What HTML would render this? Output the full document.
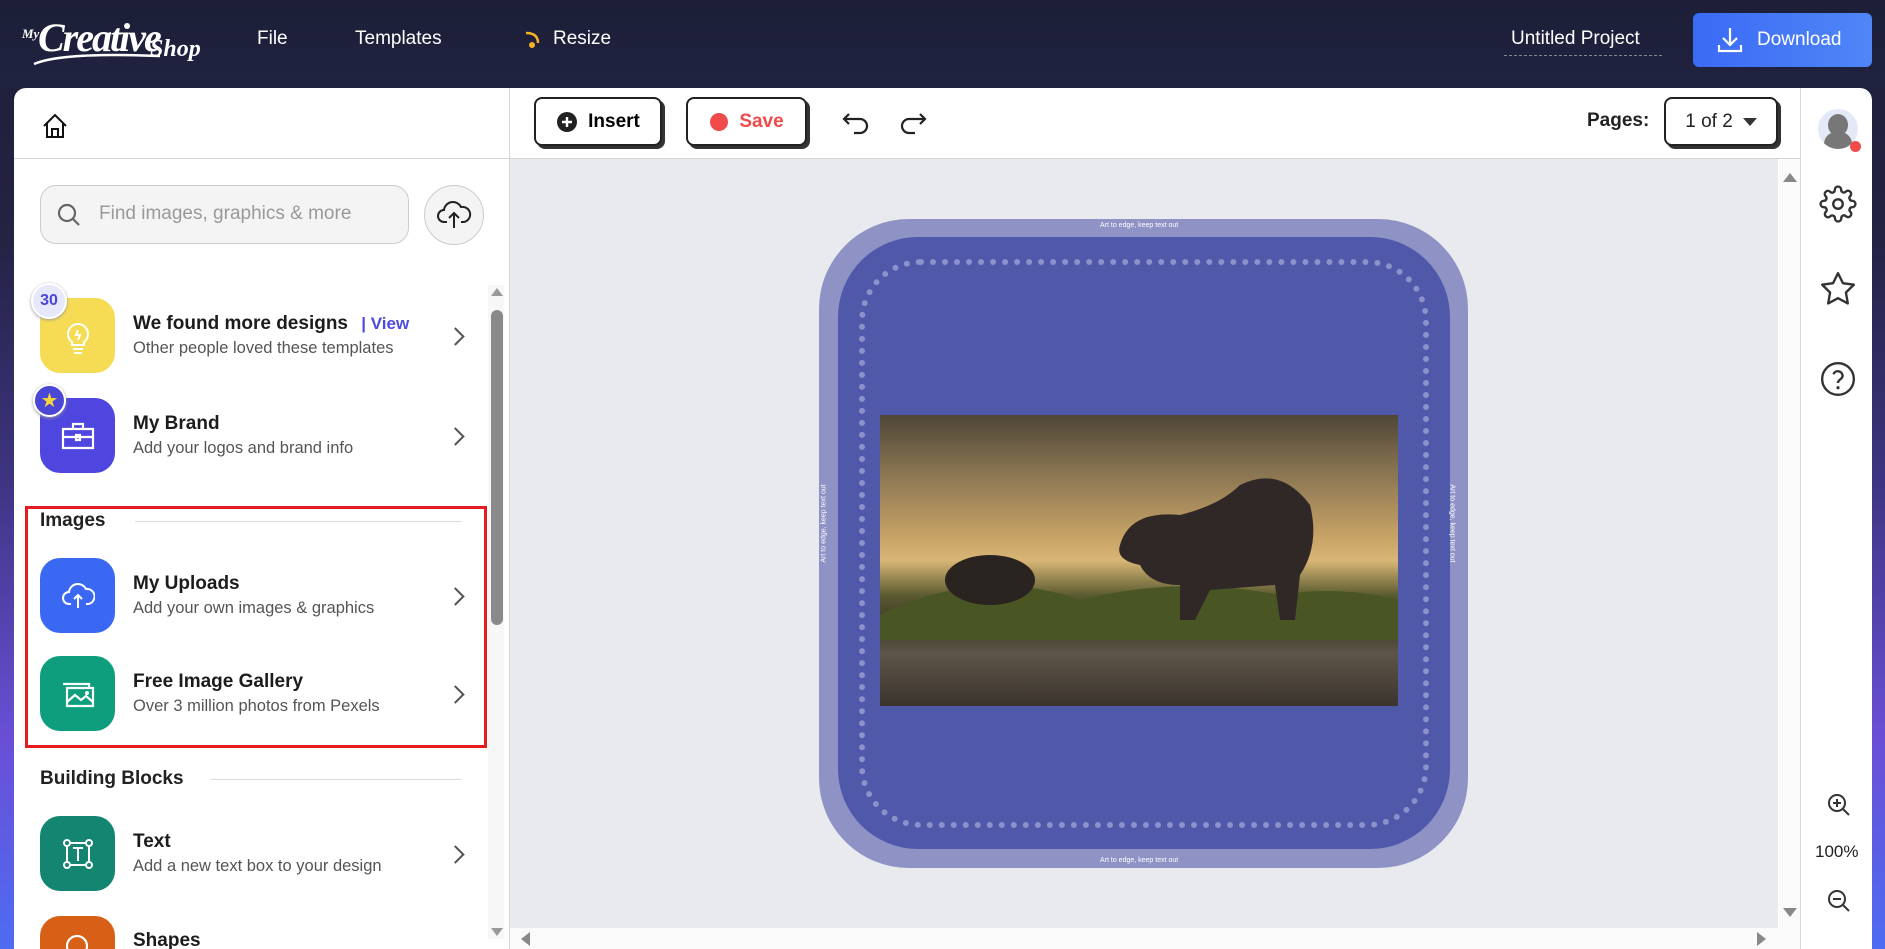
<!DOCTYPE html>
<html><head><meta charset="utf-8"><style>
*{box-sizing:border-box;margin:0;padding:0}
html,body{width:1885px;height:949px;overflow:hidden}
body{font-family:"Liberation Sans",sans-serif;background:#1d1f37}
#w{position:relative;width:1885px;height:949px;overflow:hidden;background:linear-gradient(180deg,#1d1f37 0%,#232343 25%,#3c3480 50%,#6a4fd6 78%,#4d6cf2 100%)}
.abs{position:absolute}
.nav{color:#fff;font-size:19px;top:28px}
.panel{left:14px;top:88px;width:1858px;height:861px;background:#fff;border-radius:12px 12px 0 0;overflow:hidden}
.tile{position:absolute;left:40px;width:75px;height:75px;border-radius:20px;display:flex;align-items:center;justify-content:center}
.t{position:absolute;left:133px;font-weight:bold;font-size:19px;color:#1c1c1c}
.s{position:absolute;left:133px;font-size:16.5px;color:#555}
.chev{position:absolute;left:449px;width:13px;height:13px;border-right:2.5px solid #555;border-top:2.5px solid #555;transform:rotate(45deg)}
.btn{position:absolute;top:97px;height:49px;border:2px solid #222;border-radius:8px;box-shadow:3px 3px 0 #333;background:#fff;font-weight:bold;font-size:19px;display:flex;align-items:center;justify-content:center;gap:10px}
.ri{position:absolute;left:1819px}
</style></head><body><div id="w">
<!-- top bar -->
<div class="abs" style="left:0;top:0;width:1885px;height:88px;background:linear-gradient(180deg,#1c1f36,#202241)"></div>
<div class="abs" style="left:20px;top:6px;width:180px;height:64px;color:#fff;font-family:'Liberation Serif',serif;font-style:italic;font-weight:bold;">
 <span style="font-size:13px;position:absolute;left:2px;top:20px">My</span>
 <span style="font-size:40px;position:absolute;left:18px;top:8px;letter-spacing:-2px">Creative</span>
 <span style="font-size:24px;position:absolute;left:130px;top:30px">Shop</span>
 <svg style="position:absolute;left:12px;top:42px" width="130" height="20"><path d="M2 16 Q30 4 128 8" stroke="#fff" stroke-width="2.5" fill="none"/></svg>
</div>
<div class="abs nav" style="left:257px">File</div>
<div class="abs nav" style="left:355px">Templates</div>
<svg class="abs" style="left:522px;top:29px" width="22" height="22" viewBox="0 0 22 22"><path d="M4 4 Q16 4 16 14" stroke="#f5b324" stroke-width="2.5" fill="none"/><circle cx="10" cy="16" r="3" fill="#f5b324"/></svg>
<div class="abs nav" style="left:553px">Resize</div>
<div class="abs nav" style="left:1511px;color:#fff">Untitled Project</div>
<div class="abs" style="left:1504px;top:55px;width:158px;border-top:1px dashed #888"></div>
<div class="abs" style="left:1693px;top:13px;width:179px;height:54px;border-radius:6px;background:linear-gradient(90deg,#3b6af5,#4f86f7);color:#fff;font-size:19px;display:flex;align-items:center;padding-left:24px;gap:14px">
 <svg width="26" height="28" viewBox="0 0 26 28"><path d="M13 2v17M6 12l7 7 7-7M2 19v6h22v-6" stroke="#fff" stroke-width="2.2" fill="none"/></svg>Download</div>

<div class="abs panel"></div>
<!-- left panel -->
<div class="abs" style="left:14px;top:158px;width:495px;border-top:1px solid #d6d6d6"></div>
<div class="abs" style="left:509px;top:88px;height:861px;border-left:1px solid #d6d6d6"></div>
<svg class="abs" style="left:41px;top:112px" width="28" height="28" viewBox="0 0 28 28"><path d="M3 14L14 3l11 11M6 11v14h16V11M11 25v-8h6v8" stroke="#111" stroke-width="2" fill="none"/></svg>
<div class="abs" style="left:40px;top:185px;width:369px;height:59px;border:1px solid #ccc;border-radius:16px;background:#f4f4f4"></div>
<svg class="abs" style="left:56px;top:202px" width="26" height="26" viewBox="0 0 26 26"><circle cx="11" cy="11" r="8" stroke="#666" stroke-width="2.2" fill="none"/><path d="M17 17l6 6" stroke="#666" stroke-width="2.2"/></svg>
<div class="abs" style="left:99px;top:203px;font-size:19px;color:#999">Find images, graphics &amp; more</div>
<div class="abs" style="left:424px;top:185px;width:60px;height:60px;border:1px solid #ccc;border-radius:50%;background:#f4f4f4"></div>
<svg class="abs" style="left:436px;top:198px" width="36" height="32" viewBox="0 0 36 32"><path d="M11 24H8a6 6 0 0 1 0-12 9 9 0 0 1 17-3 7 7 0 0 1 3 15h-3M18 30V15M13 20l5-5 5 5" stroke="#222" stroke-width="2" fill="none"/></svg>
<!-- scrollbar -->
<div class="abs" style="left:488px;top:285px;width:16px;height:654px;background:#f7f7f7"></div>
<div class="abs" style="left:491px;top:288px;width:0;height:0;border-left:6px solid transparent;border-right:6px solid transparent;border-bottom:8px solid #999"></div>
<div class="abs" style="left:491px;top:928px;width:0;height:0;border-left:6px solid transparent;border-right:6px solid transparent;border-top:8px solid #999"></div>
<div class="abs" style="left:491px;top:310px;width:12px;height:315px;border-radius:6px;background:#8a8a8a"></div>

<div class="tile" style="top:298px;background:#f6dc55"><svg width="32" height="36" viewBox="0 0 32 36"><path d="M10 24a10 10 0 1 1 12 0v3H10zM11 31h10M12 35h8M16 12l-2 5h4l-2 5" stroke="#fff" stroke-width="2" fill="none"/></svg></div>
<div class="abs" style="left:31px;top:283px;width:36px;height:36px;border-radius:50%;background:#e6e8fb;border:2px solid #fff;box-shadow:0 1px 3px #999;color:#4a46d6;font-weight:bold;font-size:16px;display:flex;align-items:center;justify-content:center">30</div>
<div class="t" style="top:313px">We found more designs <span style="color:#4d4ae0;font-size:17px;margin-left:8px">| View</span></div>
<div class="s" style="top:339px">Other people loved these templates</div>
<div class="chev" style="top:330px"></div>

<div class="tile" style="top:398px;background:#4f46e0"><svg width="34" height="28" viewBox="0 0 34 28"><path d="M2 7h30v19H2zM12 7V2h10v5M2 15h30M15 13h4v5h-4z" stroke="#fff" stroke-width="2.2" fill="none"/></svg></div>
<div class="abs" style="left:33px;top:384px;width:33px;height:33px;border-radius:50%;background:#4a46d6;border:2px solid #fff;box-shadow:0 1px 3px #999;color:#f9d73a;font-size:20px;display:flex;align-items:center;justify-content:center">★</div>
<div class="t" style="top:413px">My Brand</div>
<div class="s" style="top:439px">Add your logos and brand info</div>
<div class="chev" style="top:430px"></div>

<div class="abs" style="left:25px;top:506px;width:462px;height:242px;border:3px solid #e31c23"></div>
<div class="abs" style="left:40px;top:510px;font-weight:bold;font-size:19px;color:#222">Images</div>
<div class="abs" style="left:135px;top:521px;width:327px;border-top:1px solid #ddd"></div>
<div class="tile" style="top:558px;background:#3b68f2"><svg width="34" height="28" viewBox="0 0 34 28"><path d="M10 22H8a6 6 0 0 1 0-12 9 9 0 0 1 17-3 7 7 0 0 1 2 15h-2M17 26V13M13 17l4-4 4 4" stroke="#fff" stroke-width="2" fill="none"/></svg></div>
<div class="t" style="top:573px">My Uploads</div>
<div class="s" style="top:599px">Add your own images &amp; graphics</div>
<div class="chev" style="top:590px"></div>
<div class="tile" style="top:656px;background:#0e9e7e"><svg width="34" height="28" viewBox="0 0 34 28"><path d="M2 4h26v4M6 8h26v18H6zM6 22l8-7 6 5 5-4 7 6" stroke="#fff" stroke-width="2.2" fill="none"/><circle cx="26" cy="13" r="2" fill="#fff"/></svg></div>
<div class="t" style="top:671px">Free Image Gallery</div>
<div class="s" style="top:697px">Over 3 million photos from Pexels</div>
<div class="chev" style="top:688px"></div>

<div class="abs" style="left:40px;top:768px;font-weight:bold;font-size:19px;color:#222">Building Blocks</div>
<div class="abs" style="left:210px;top:779px;width:252px;border-top:1px solid #ddd"></div>
<div class="tile" style="top:816px;background:#138570"><svg width="34" height="34" viewBox="0 0 34 34"><path d="M6 6h22v22H6z" stroke="#fff" stroke-width="2" fill="none"/><circle cx="6" cy="6" r="3" fill="#138570" stroke="#fff" stroke-width="2"/><circle cx="28" cy="6" r="3" fill="#138570" stroke="#fff" stroke-width="2"/><circle cx="6" cy="28" r="3" fill="#138570" stroke="#fff" stroke-width="2"/><circle cx="28" cy="28" r="3" fill="#138570" stroke="#fff" stroke-width="2"/><path d="M12 11h10M17 11v13" stroke="#fff" stroke-width="2"/></svg></div>
<div class="t" style="top:831px">Text</div>
<div class="s" style="top:857px">Add a new text box to your design</div>
<div class="chev" style="top:848px"></div>
<div class="abs" style="left:40px;top:916px;width:75px;height:33px;border-radius:20px 20px 0 0;background:#d85f16;overflow:hidden"><svg width="75" height="33"><circle cx="37" cy="30" r="10" stroke="#fff" stroke-width="2.2" fill="none"/></svg></div>
<div class="t" style="top:930px">Shapes</div>

<!-- toolbar -->
<div class="btn" style="left:534px;width:128px"><svg width="22" height="22"><circle cx="11" cy="11" r="10" fill="#222"/><path d="M11 6v10M6 11h10" stroke="#fff" stroke-width="2.4"/></svg>Insert</div>
<div class="btn" style="left:686px;width:121px;color:#f04a4a"><svg width="20" height="20"><circle cx="10" cy="10" r="9" fill="#f04a4a"/></svg>Save</div>
<svg class="abs" style="left:841px;top:110px" width="30" height="26" viewBox="0 0 30 26"><path d="M8 4L3 9l5 5M3 9h16a7 7 0 0 1 0 14h-6" stroke="#222" stroke-width="2.2" fill="none"/></svg>
<svg class="abs" style="left:898px;top:110px" width="30" height="26" viewBox="0 0 30 26"><path d="M22 4l5 5-5 5M27 9H11a7 7 0 0 0 0 14h6" stroke="#222" stroke-width="2.2" fill="none"/></svg>
<div class="abs" style="left:1587px;top:110px;font-weight:bold;font-size:19px;color:#222">Pages:</div>
<div class="btn" style="left:1664px;width:114px;font-weight:normal;font-size:19px;color:#222">1 of 2 <span style="width:0;height:0;border-left:7px solid transparent;border-right:7px solid transparent;border-top:8px solid #333"></span></div>
<div class="abs" style="left:510px;top:158px;width:1291px;border-top:1px solid #d6d6d6"></div>

<!-- canvas -->
<div class="abs" style="left:510px;top:159px;width:1268px;height:769px;background:#e9eaee"></div>
<div class="abs" style="left:1779px;top:159px;width:21px;height:769px;background:#fafafa"></div>
<div class="abs" style="left:1783px;top:173px;border-left:7px solid transparent;border-right:7px solid transparent;border-bottom:9px solid #888"></div>
<div class="abs" style="left:1783px;top:908px;border-left:7px solid transparent;border-right:7px solid transparent;border-top:9px solid #888"></div>
<div class="abs" style="left:510px;top:928px;width:1290px;height:21px;background:#fafafa"></div>
<div class="abs" style="left:521px;top:932px;border-top:7px solid transparent;border-bottom:7px solid transparent;border-right:9px solid #888"></div>
<div class="abs" style="left:1757px;top:932px;border-top:7px solid transparent;border-bottom:7px solid transparent;border-left:9px solid #888"></div>
<div class="abs" style="left:1800px;top:88px;height:861px;border-left:1px solid #d6d6d6"></div>

<div class="abs" style="left:819px;top:219px;width:649px;height:649px;border-radius:90px;background:#8e92c5"></div>
<div class="abs" style="left:838px;top:237px;width:612px;height:612px;border-radius:80px;background:#4f58a9"></div>
<div class="abs" style="left:859px;top:259px;width:570px;height:569px;border-radius:62px;border:6px dotted #8b91cb"></div>
<div class="abs" style="left:1100px;top:222px;font-size:7px;color:#fff">Art to edge, keep text out</div>
<div class="abs" style="left:1100px;top:857px;font-size:7px;color:#fff">Art to edge, keep text out</div>
<div class="abs" style="left:785px;top:520px;font-size:7px;color:#fff;transform:rotate(-90deg)">Art to edge, keep text out</div>
<div class="abs" style="left:1413px;top:520px;font-size:7px;color:#fff;transform:rotate(90deg)">Art to edge, keep text out</div>
<div class="abs" style="left:880px;top:415px;width:518px;height:291px;overflow:hidden;background:linear-gradient(180deg,#4e4637 0%,#8a7552 20%,#c7a366 42%,#d8b676 50%,#5a5a30 62%,#3c3a26 72%,#5d5548 82%,#3b342d 100%)">
 <svg width="518" height="291" style="position:absolute;left:0;top:0">
  <path d="M0 200 Q100 150 200 185 Q300 160 400 180 Q460 170 518 185 L518 225 L0 225Z" fill="#4a5524"/>
  <ellipse cx="110" cy="165" rx="45" ry="25" fill="#2a2420"/>
  <path d="M240 130 Q250 95 300 100 Q340 90 360 70 Q400 50 430 90 Q440 130 420 160 L415 205 L400 205 L395 170 L330 175 L315 205 L300 205 L300 170 Q270 170 260 150 Q235 145 240 130Z" fill="#2f2826"/>
 </svg>
</div>

<!-- right sidebar -->
<div class="abs" style="left:1818px;top:109px;width:40px;height:40px;border-radius:50%;background:#e4e9f7;overflow:hidden">
 <div class="abs" style="left:10px;top:5px;width:20px;height:22px;border-radius:50%;background:#777"></div>
 <div class="abs" style="left:6px;top:23px;width:28px;height:20px;border-radius:12px 12px 4px 4px;background:#777"></div>
</div>
<div class="abs" style="left:1850px;top:141px;width:11px;height:11px;border-radius:50%;background:#f04a4a"></div>
<svg class="ri" style="top:185px" width="38" height="38" viewBox="0 0 24 24"><path d="M12 15a3 3 0 1 0 0-6 3 3 0 0 0 0 6z" fill="none" stroke="#333" stroke-width="1.5"/><path d="M19.4 15a1.65 1.65 0 0 0 .33 1.82l.06.06a2 2 0 1 1-2.83 2.830l-.06-.06a1.65 1.65 0 0 0-1.82-.33 1.65 1.65 0 0 0-1 1.51V21a2 2 0 1 1-4 0v-.09A1.65 1.65 0 0 0 9 19.4a1.65 1.65 0 0 0-1.820.33l-.06.06a2 2 0 1 1-2.83-2.83l.06-.06A1.65 1.65 0 0 0 4.68 15a1.65 1.65 0 0 0-1.51-1H3a2 2 0 1 1 0-4h.09A1.65 1.65 0 0 0 4.6 9a1.65 1.65 0 0 0-.33-1.82l-.06-.06a2 2 0 1 1 2.83-2.83l.06.06A1.65 1.65 0 0 0 9 4.68a1.65 1.65 0 0 0 1-1.51V3a2 2 0 1 1 4 0v.09a1.65 1.65 0 0 0 1 1.51 1.65 1.65 0 0 0 1.82-.33l.06-.06a2 2 0 1 1 2.83 2.83l-.06.06A1.650 1.65 0 0 0 19.4 9a1.65 1.65 0 0 0 1.51 1H21a2 2 0 1 1 0 4h-.09a1.65 1.65 0 0 0-1.51 1z" fill="none" stroke="#333" stroke-width="1.5"/></svg>
<svg class="ri" style="top:270px" width="38" height="38" viewBox="0 0 24 24"><path d="M12 2l3.1 6.3 6.9 1-5 4.9 1.2 6.9L12 17.8 5.8 21.1 7 14.2 2 9.3l6.9-1z" fill="none" stroke="#333" stroke-width="1.5" stroke-linejoin="round"/></svg>
<svg class="ri" style="top:360px" width="38" height="38" viewBox="0 0 24 24"><circle cx="12" cy="12" r="10" fill="none" stroke="#333" stroke-width="1.5"/><path d="M9.1 9a3 3 0 0 1 5.8 1c0 2-3 2.5-3 4.5" fill="none" stroke="#333" stroke-width="1.5"/><circle cx="12" cy="17.5" r="1" fill="#333"/></svg>
<svg class="ri" style="left:1826px;top:792px" width="26" height="26" viewBox="0 0 26 26"><circle cx="11" cy="11" r="8" stroke="#333" stroke-width="2" fill="none"/><path d="M17 17l6 6M7 11h8M11 7v8" stroke="#333" stroke-width="2"/></svg>
<div class="abs" style="left:1815px;top:842px;font-size:17px;color:#222">100%</div>
<svg class="ri" style="left:1826px;top:888px" width="26" height="26" viewBox="0 0 26 26"><circle cx="11" cy="11" r="8" stroke="#333" stroke-width="2" fill="none"/><path d="M17 17l6 6M7 11h8" stroke="#333" stroke-width="2"/></svg>
</div></body></html>
